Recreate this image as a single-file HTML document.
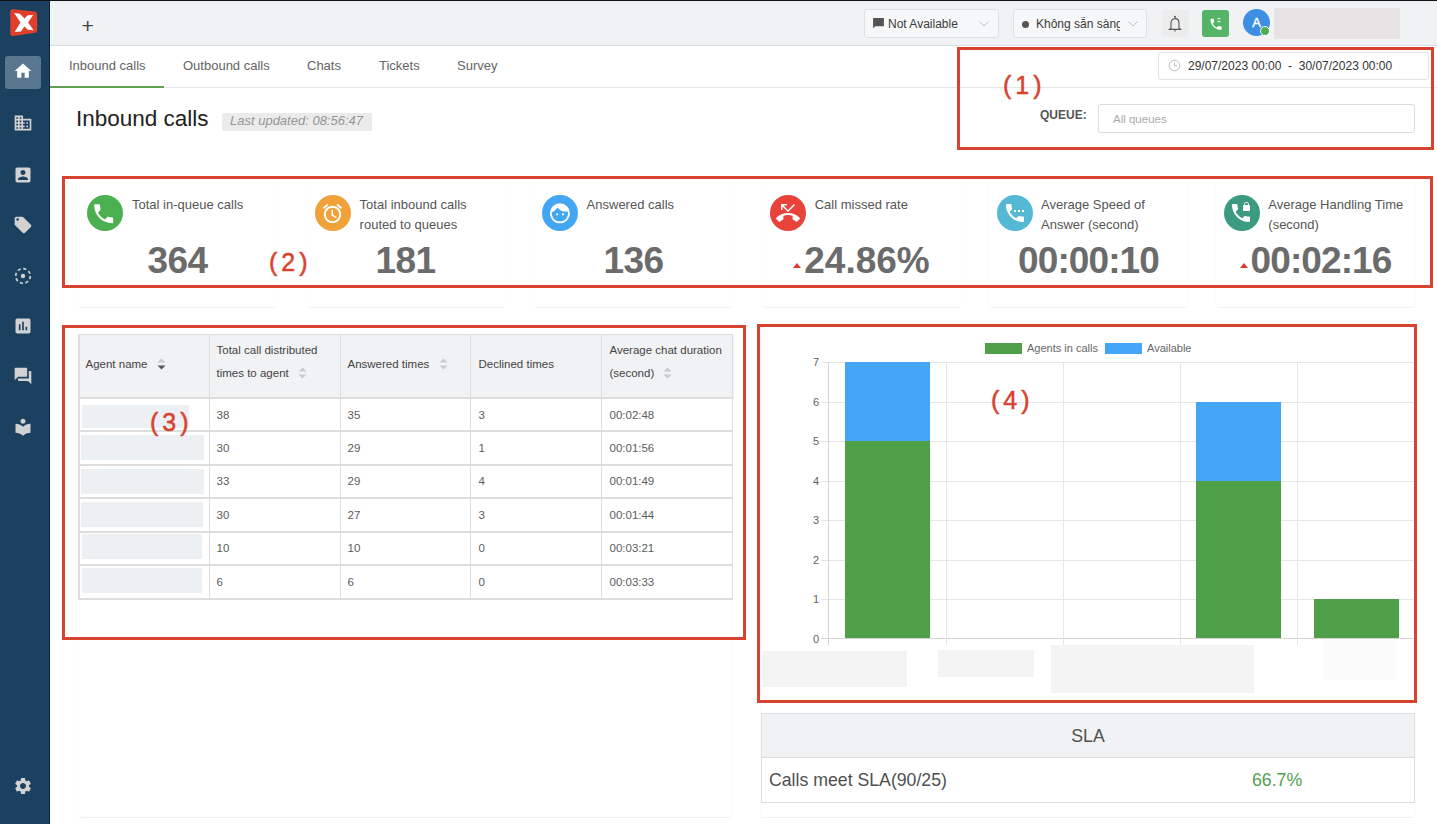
<!DOCTYPE html>
<html><head><meta charset="utf-8">
<style>
*{box-sizing:border-box;margin:0;padding:0}
html,body{width:1437px;height:824px;overflow:hidden;background:#fff;font-family:"Liberation Sans",sans-serif;color:#555}
.abs{position:absolute}
#topline{left:0;top:0;width:1437px;height:1px;background:#111}
#side{left:0;top:1px;width:49px;height:823px;background:#1c4060;border-right:1px solid #223f69}
#sideline{left:49px;top:0;width:1px;height:824px;background:#0d1f3a}
#topbar{left:50px;top:1px;width:1387px;height:45px;background:#f1f2f4;border-bottom:1px solid #dcdde0}
#tabs{left:50px;top:46px;width:1387px;height:42px;background:#fff;border-bottom:1px solid #e6e6e6}
.tab{position:absolute;top:13px;font-size:13px;color:#646464;white-space:nowrap}
.redbox{position:absolute;border:3px solid #d7432f}
.ann{position:absolute;color:#d7432f;font-family:"Liberation Sans",sans-serif;font-size:25px;line-height:30px;letter-spacing:4px;white-space:nowrap;-webkit-text-stroke:0.5px #d7432f}
.card{position:absolute;background:#fff;border:1px solid #fcfcfc;border-bottom-color:#f1f1f1;border-radius:5px}
.ic{position:absolute;width:36px;height:36px;border-radius:50%}
.lbl{position:absolute;font-size:13px;line-height:20px;color:#555;white-space:nowrap}
.num{position:absolute;font-size:37px;font-weight:bold;color:#6b6b6b;white-space:nowrap;text-align:center;line-height:40px}
.tri{display:inline-block;width:0;height:0;border-left:4.5px solid transparent;border-right:4.5px solid transparent;border-bottom:5px solid #e0392b;vertical-align:baseline;margin-right:3px;position:relative;top:-5px}

.tbl{position:absolute;border-collapse:collapse;table-layout:fixed;font-size:11.5px;color:#5c5c5c}
.tbl td,.tbl th{border:1px solid transparent;padding:0 6.5px;text-align:left;font-weight:normal;vertical-align:middle}
.tbl th{background:#f1f2f4;line-height:23px;color:#444;padding-bottom:4px}
.tbl th.two{padding-bottom:8px}
.tbl td{padding-bottom:2px}
.tbl thead tr{border-bottom:2px solid transparent}
.sort{display:inline-block;width:9px;height:12px;vertical-align:middle;margin-left:6px;position:relative;top:-1px}
.gbar{position:absolute;background:#edf0f2}
</style></head><body>
<div id="topline" class="abs"></div>
<div id="side" class="abs"></div>
<div id="sideline" class="abs"></div>
<div class="abs" style="left:50px;top:87px;width:1px;height:737px;background:#f4f6fc"></div>
<div id="topbar" class="abs"></div>
<div id="tabs" class="abs"></div>

<!-- logo -->
<svg class="abs" style="left:0;top:0" width="49" height="45" viewBox="0 0 49 45">
 <path d="M13 9.3 L34.3 11.6 Q37.1 11.9 37.1 14.6 L37.3 30.4 Q37.3 32.4 35.1 32.7 L13.6 36 Q10.3 36.4 10.3 33 L10.3 12.5 Q10.3 9 13 9.3Z" fill="#df3f2b"/>
 <path d="M14.2 13 L20 13.8 L24.4 18.6 L27.8 15.3 L33.2 14.9 L28.1 22.4 L33.6 30.2 L27.8 29.8 L24.4 26.6 L21 31.6 L14.7 32.1 L20.5 22.6 Z" fill="#fff"/>
</svg>
<div class="abs" style="left:5px;top:56px;width:36px;height:33px;background:#5a7790;border-radius:3px"></div>
<svg class="abs" style="left:13px;top:61px" width="20" height="20" viewBox="0 0 24 24"><path fill="#fff" d="M10 20v-6h4v6h5v-8h3L12 3 2 12h3v8z"/></svg>
<svg class="abs" style="left:13px;top:113px" width="20" height="20" viewBox="0 0 24 24"><path fill="#d2d2d2" d="M12 7V3H2v18h20V7H12zM6 19H4v-2h2v2zm0-4H4v-2h2v2zm0-4H4V9h2v2zm0-4H4V5h2v2zm4 12H8v-2h2v2zm0-4H8v-2h2v2zm0-4H8V9h2v2zm0-4H8V5h2v2zm10 12h-8v-2h2v-2h-2v-2h2v-2h-2V9h8v10zm-2-8h-2v2h2v-2zm0 4h-2v2h2v-2z"/></svg>
<svg class="abs" style="left:13px;top:165px" width="20" height="20" viewBox="0 0 24 24"><path fill="#d2d2d2" d="M3 5v14c0 1.1.89 2 2 2h14c1.1 0 2-.9 2-2V5c0-1.1-.9-2-2-2H5c-1.11 0-2 .9-2 2zm12 4c0 1.66-1.34 3-3 3s-3-1.34-3-3 1.34-3 3-3 3 1.34 3 3zm-9 8c0-2 4-3.1 6-3.1s6 1.1 6 3.1v1H6v-1z"/></svg>
<svg class="abs" style="left:13px;top:215px" width="20" height="20" viewBox="0 0 24 24"><path fill="#d2d2d2" d="M21.41 11.58l-9-9C12.05 2.22 11.55 2 11 2H4c-1.1 0-2 .9-2 2v7c0 .55.22 1.05.59 1.42l9 9c.36.36.86.58 1.410.58.55 0 1.05-.22 1.41-.59l7-7c.37-.36.59-.86.59-1.41 0-.55-.23-1.06-.59-1.42zM5.5 7C4.670 7 4 6.33 4 5.5S4.67 4 5.5 4 7 4.67 7 5.5 6.33 7 5.5 7z"/></svg>
<svg class="abs" style="left:13px;top:266px" width="20" height="20" viewBox="0 0 20 20"><circle cx="10" cy="10" r="7.3" fill="none" stroke="#d2d2d2" stroke-width="1.7" stroke-dasharray="3.2 2.53"/><circle cx="10" cy="10" r="2.2" fill="#d2d2d2"/></svg>
<svg class="abs" style="left:13px;top:316px" width="20" height="20" viewBox="0 0 24 24"><path fill="#d2d2d2" d="M19 3H5c-1.1 0-2 .9-2 2v14c0 1.1.9 2 2 2h14c1.1 0 2-.9 2-2V5c0-1.1-.9-2-2-2zM9 17H7v-7h2v7zm4 0h-2V7h2v10zm4 0h-2v-4h2v4z"/></svg>
<svg class="abs" style="left:13px;top:366px" width="20" height="20" viewBox="0 0 24 24"><path fill="#d2d2d2" d="M21 6h-2v9H6v2c0 .55.45 1 1 1h11l4 4V7c0-.55-.45-1-1-1zm-4 6V3c0-.55-.45-1-1-1H3c-.55 0-1 .45-1 1v14l4-4h10c.55 0 1-.45 1-1z"/></svg>
<svg class="abs" style="left:13px;top:417px" width="20" height="20" viewBox="0 0 24 24"><path fill="#d2d2d2" d="M12 11.55C9.64 9.35 6.48 8 3 8v11c3.48 0 6.64 1.35 9 3.55 2.36-2.19 5.52-3.55 9-3.55V8c-3.48 0-6.64 1.35-9 3.55zM12 8c1.66 0 3-1.34 3-3s-1.340-3-3-3-3 1.34-3 3 1.34 3 3 3z"/></svg>
<svg class="abs" style="left:13px;top:776px" width="20" height="20" viewBox="0 0 24 24"><path fill="#d2d2d2" d="M19.14 12.94c.04-.3.06-.61.06-.94 0-.32-.02-.64-.07-.94l2.03-1.58c.18-.14.23-.41.12-.61l-1.92-3.32c-.12-.22-.37-.29-.59-.22l-2.39.96c-.5-.38-1.03-.7-1.62-.94l-.36-2.54c-.04-.24-.24-.41-.48-.41h-3.84c-.24 0-.43.17-.47.41l-.36 2.54c-.59.24-1.130.57-1.62.94l-2.39-.96c-.22-.08-.47 0-.59.22L2.74 8.87c-.12.21-.08.47.12.61l2.03 1.58c-.05.3-.09.63-.09.94s.02.64.07.94l-2.03 1.58c-.18.14-.23.41-.12.61l1.92 3.32c.12.22.37.29.59.22l2.39-.96c.5.38 1.03.7 1.62.94l.36 2.54c.05.24.24.41.48.41h3.84c.24 0 .44-.17.47-.41l.36-2.54c.59-.24 1.13-.56 1.62-.94l2.39.96c.22.08.47 0 .59-.22l1.92-3.32c.12-.22.07-.47-.12-.61l-2.01-1.58zM12 15.6c-1.98 0-3.6-1.62-3.6-3.6s1.62-3.6 3.6-3.6 3.6 1.62 3.6 3.6-1.62 3.6-3.6 3.6z"/></svg>

<!-- topbar -->
<div class="abs" style="left:81.5px;top:16px;font-size:21px;color:#444;line-height:20px">+</div>
<div class="abs" style="left:864px;top:9px;width:135px;height:29px;border:1px solid #dfe0e3;border-radius:3px;background:#f6f7f8"></div>
<svg class="abs" style="left:872px;top:17px" width="13" height="13" viewBox="0 0 24 24"><path fill="#555" d="M2 2h20v15H6l-4 4z"/></svg>
<div class="abs" style="left:888px;top:17px;font-size:12px;line-height:14px;color:#3a3a3a;white-space:nowrap">Not Available</div>
<svg class="abs" style="left:979px;top:21px" width="10" height="6" viewBox="0 0 10 6"><path d="M0.5 0.5L5 5L9.5 0.5" fill="none" stroke="#bbb" stroke-width="1"/></svg>
<div class="abs" style="left:1013px;top:9px;width:134px;height:29px;border:1px solid #dfe0e3;border-radius:3px;background:#f6f7f8"></div>
<div class="abs" style="left:1022px;top:21px;width:7px;height:7px;border-radius:50%;background:#555"></div>
<div class="abs" style="left:1036px;top:17px;width:84px;overflow:hidden;font-size:12px;line-height:15px;color:#3a3a3a;white-space:nowrap">Không sẵn sàng</div>
<svg class="abs" style="left:1128px;top:21px" width="10" height="6" viewBox="0 0 10 6"><path d="M0.5 0.5L5 5L9.5 0.5" fill="none" stroke="#bbb" stroke-width="1"/></svg>
<div class="abs" style="left:1162px;top:10px;width:27px;height:27px;border-radius:3px;background:#ececed"></div>
<svg class="abs" style="left:1168px;top:15px" width="14" height="18" viewBox="0 0 14 18"><path d="M7 1.2v1.6M3 13V8.3C3 5.6 4.7 3.6 7 3.6s4 2 4 4.7V13l1.6 1.4H1.4L3 13zM7 14.4v2" fill="none" stroke="#555" stroke-width="1.1"/><circle cx="7" cy="1.6" r="0.9" fill="#555"/></svg>
<div class="abs" style="left:1202px;top:10px;width:27px;height:27px;border-radius:3px;background:#55b468"></div>
<svg class="abs" style="left:1207px;top:15px" width="17" height="17" viewBox="0 0 24 24"><path fill="#fff" d="M6.6 10.8c1.4 2.8 3.8 5.1 6.6 6.6l2.2-2.2c.3-.3.7-.4 1-.2 1.1.4 2.3.6 3.6.6.6 0 1 .4 1 1V20c0 .6-.4 1-1 1C10.6 21 3 13.4 3 4c0-.6.5-1 1-1h3.5c.6 0 1 .4 1 1 0 1.3.2 2.5.6 3.6.1.3 0 .7-.2 1L6.6 10.8z" transform="translate(2.2 2.5) scale(0.88)"/><rect x="14.8" y="4.6" width="4.2" height="1.5" fill="#fff"/><rect x="14.8" y="8.6" width="4.2" height="1.5" fill="#fff"/></svg>
<div class="abs" style="left:1243px;top:9px;width:27px;height:27px;border-radius:50%;background:#3d8fe3;color:#fff;font-size:13px;line-height:27px;text-align:center;-webkit-text-stroke:0.4px #fff">A</div>
<div class="abs" style="left:1260px;top:26px;width:10px;height:10px;border-radius:50%;background:#4cae4c;border:1.3px solid #fff"></div>
<div class="abs" style="left:1274px;top:8px;width:126px;height:31px;background:#e7e3e5"></div>
<!-- tabs -->
<div class="tab" style="left:69px;top:58px">Inbound calls</div>
<div class="tab" style="left:183px;top:58px">Outbound calls</div>
<div class="tab" style="left:307px;top:58px">Chats</div>
<div class="tab" style="left:379px;top:58px">Tickets</div>
<div class="tab" style="left:457px;top:58px">Survey</div>
<div class="abs" style="left:50px;top:86px;width:114px;height:2px;background:#62a052"></div>

<!-- header -->
<div class="abs" style="left:76px;top:106px;font-size:22.5px;line-height:26px;color:#222;white-space:nowrap">Inbound calls</div>
<div class="abs" style="left:222px;top:113px;width:150px;height:18px;background:#ebebeb;border-radius:2px"></div>
<div class="abs" style="left:230px;top:113px;font-size:13px;line-height:16px;color:#969696;font-style:italic;white-space:nowrap">Last updated: 08:56:47</div>
<div class="abs" style="left:1158px;top:52px;width:271px;height:28px;border:1px solid #e3e3e3;border-radius:3px;background:#fff"></div>
<svg class="abs" style="left:1168px;top:59px" width="13" height="13" viewBox="0 0 13 13"><circle cx="6.5" cy="6.5" r="5.3" fill="none" stroke="#bbb" stroke-width="1"/><path d="M6.5 3.3V6.7H9" fill="none" stroke="#bbb" stroke-width="1"/></svg>
<div class="abs" style="left:1188px;top:59px;font-size:12px;line-height:14px;color:#333;white-space:pre">29/07/2023 00:00  -  30/07/2023 00:00</div>
<div class="abs" style="left:1040px;top:108px;font-size:12px;line-height:14px;color:#555;font-weight:bold;white-space:nowrap">QUEUE:</div>
<div class="abs" style="left:1098px;top:104px;width:317px;height:29px;border:1px solid #dcdcdc;border-radius:3px;background:#fff"></div>
<div class="abs" style="left:1113px;top:112px;font-size:11.5px;line-height:14px;color:#aaa;white-space:nowrap">All queues</div>
<!-- cards -->
<div class="card" style="left:77px;top:181px;width:201px;height:127px"></div>
<div class="card" style="left:305px;top:181px;width:201px;height:127px"></div>
<div class="card" style="left:533px;top:181px;width:201px;height:127px"></div>
<div class="card" style="left:761px;top:181px;width:201px;height:127px"></div>
<div class="card" style="left:988px;top:181px;width:201px;height:127px"></div>
<div class="card" style="left:1215px;top:181px;width:201px;height:127px"></div>
<div class="ic" style="left:86.5px;top:195px;background:#4caf50"></div>
<div class="lbl" style="left:132px;top:195px">Total in-queue calls</div>
<div class="num" style="left:77px;top:241px;width:201px"><span style="letter-spacing:-0.6px">364</span></div>
<div class="ic" style="left:314.5px;top:195px;background:#f0a13a"></div>
<div class="lbl" style="left:359.6px;top:195px">Total inbound calls<br>routed to queues</div>
<div class="num" style="left:305px;top:241px;width:201px"><span style="letter-spacing:-0.6px">181</span></div>
<div class="ic" style="left:541.8px;top:195px;background:#42a6f2"></div>
<div class="lbl" style="left:586.6px;top:195px">Answered calls</div>
<div class="num" style="left:533px;top:241px;width:201px"><span style="letter-spacing:-0.6px">136</span></div>
<div class="ic" style="left:770px;top:195px;background:#e8433a"></div>
<div class="lbl" style="left:814.7px;top:195px">Call missed rate</div>
<div class="num" style="left:761px;top:241px;width:201px"><span class="tri"></span>24.86%</div>
<div class="ic" style="left:996.8px;top:195px;background:#55b9d6"></div>
<div class="lbl" style="left:1041px;top:195px">Average Speed of<br>Answer (second)</div>
<div class="num" style="left:988px;top:241px;width:201px"><span style="letter-spacing:-0.9px">00:00:10</span></div>
<div class="ic" style="left:1224px;top:195px;background:#3b9a7f"></div>
<div class="lbl" style="left:1268.3px;top:195px">Average Handling Time<br>(second)</div>
<div class="num" style="left:1215px;top:241px;width:201px"><span class="tri"></span><span style="letter-spacing:-0.9px">00:02:16</span></div>

<div class="card" style="left:77px;top:327px;width:656px;height:491px"></div>
<div class="card" style="left:760px;top:327px;width:656px;height:491px"></div>

<svg class="abs" style="left:91.4px;top:200.5px" width="25.4" height="25.4" viewBox="0 0 24 24"><path fill="#fff" d="M20 15.5c-1.25 0-2.45-.2-3.57-.57-.35-.11-.74-.03-1.02.24l-2.2 2.2c-2.830-1.44-5.15-3.75-6.59-6.59l2.2-2.21c.28-.26.36-.65.25-1C8.7 6.45 8.5 5.25 8.5 4c0-.55-.45-1-1-1H4c-.55 0-1 .45-1 1 0 9.39 7.61 17 17 17 .55 0 1-.45 1-1v-3.5c0-.55-.45-1-1-1z"/></svg>
<svg class="abs" style="left:320.9px;top:201.9px" width="23" height="23" viewBox="0 0 24 24"><path fill="#fff" d="M22 5.72l-4.6-3.86-1.29 1.53 4.6 3.86L22 5.72zM7.88 3.39L6.6 1.86 2 5.71l1.29 1.53 4.59-3.85zM12.5 8H11v6l4.75 2.85.75-1.23-4-2.37V8zM12 4c-4.97 0-9 4.03-9 9s4.02 9 9 9c4.97 0 9-4.03 9-9s-4.03-9-9-9zm0 16c-3.87 0-7-3.13-7-7s3.13-7 7-7 7 3.13 7 7-3.13 7-7 7z"/></svg>
<svg class="abs" style="left:541.9px;top:194.7px" width="36" height="36" viewBox="0 0 36 36"><defs><clipPath id="fc"><circle cx="17.9" cy="18.3" r="9"/></clipPath></defs><circle cx="17.9" cy="18.3" r="9.15" fill="none" stroke="#fff" stroke-width="1.8"/><path clip-path="url(#fc)" d="M8 17.6 C11 17.2 14 15 15.4 12.4 C17.5 15.5 21.5 17 25 16.5 C26 16.5 27 16.8 28 17 L28 8 L8 8Z" fill="#fff"/><circle cx="15.1" cy="19.3" r="1.1" fill="#fff"/><circle cx="21" cy="19.3" r="1.1" fill="#fff"/></svg>
<svg class="abs" style="left:776px;top:201px" width="24" height="24" viewBox="0 0 24 24"><path fill="#fff" d="M6.5 5.5L12 11l7-7-1-1-6 6-4.5-4.5H11V3H5v6h1.5V5.5zm17.21 11.17C20.66 13.78 16.54 12 12 12 7.46 12 3.34 13.78.29 16.67c-.18.18-.29.43-.29.71s.11.53.29.71l2.48 2.48c.18.18.43.29.71.29.27 0 .52-.11.7-.28.79-.74 1.69-1.36 2.66-1.85.33-.16.56-.5.56-.9v-3.1c1.45-.48 3-.73 4.6-.73 1.6 0 3.15.25 4.6.72v3.1c0 .39.23.74.56.9.98.49 1.87 1.12 2.67 1.850.18.18.43.28.7.28.28 0 .53-.11.71-.29l2.48-2.48c.18-.18.29-.43.29-.71s-.12-.52-.3-.7z"/></svg>
<svg class="abs" style="left:1002.8px;top:201.2px" width="24" height="24" viewBox="0 0 24 24"><path fill="#fff" d="M20 15.5c-1.25 0-2.45-.2-3.57-.57-.35-.11-.74-.03-1.02.24l-2.2 2.2c-2.830-1.44-5.15-3.75-6.59-6.59l2.2-2.21c.28-.26.36-.65.25-1C8.7 6.45 8.5 5.25 8.5 4c0-.55-.45-1-1-1H4c-.55 0-1 .45-1 1 0 9.39 7.61 17 17 17 .55 0 1-.45 1-1v-3.5c0-.55-.45-1-1-1zM11 9h2v2h-2zM15 9h2v2h-2zM19 9h2v2h-2z"/></svg>
<svg class="abs" style="left:1229.3px;top:201.2px" width="24" height="24" viewBox="0 0 24 24"><path fill="#fff" d="M20 15.5c-1.25 0-2.45-.2-3.57-.57-.35-.11-.74-.03-1.02.24l-2.2 2.2c-2.830-1.44-5.15-3.75-6.59-6.59l2.2-2.21c.28-.26.36-.65.25-1C8.7 6.45 8.5 5.25 8.5 4c0-.55-.45-1-1-1H4c-.55 0-1 .45-1 1 0 9.39 7.61 17 17 17 .55 0 1-.45 1-1v-3.5c0-.55-.45-1-1-1zM20 4v-.5C20 2.12 18.88 1 17.5 1S15 2.12 15 3.5V4c-.55 0-1 .45-1 1v4c0 .55.45 1 1 1h5c.55 0 1-.45 1-1V5c0-.55-.45-1-1-1zm-.8 0h-3.4v-.5c0-.94.76-1.7 1.7-1.7s1.7.76 1.7 1.7V4z"/></svg>
<!-- table -->
<table class="tbl" style="left:78px;top:334px;width:655px">
<colgroup><col style="width:131px"><col style="width:131px"><col style="width:131px"><col style="width:131px"><col style="width:131px"></colgroup>
<thead><tr style="height:64px">
<th>Agent name <svg class="sort" viewBox="0 0 9 12"><path d="M0.5 4.5L4.5 0.5L8.5 4.5Z" fill="#c6cbd2"/><path d="M0.5 7.5L4.5 11.5L8.5 7.5Z" fill="#555"/></svg></th>
<th class="two">Total call distributed<br>times to agent <svg class="sort" viewBox="0 0 9 12"><path d="M0.5 4.5L4.5 0.5L8.5 4.5Z" fill="#c6cbd2"/><path d="M0.5 7.5L4.5 11.5L8.5 7.5Z" fill="#c6cbd2"/></svg></th>
<th>Answered times <svg class="sort" viewBox="0 0 9 12"><path d="M0.5 4.5L4.5 0.5L8.5 4.5Z" fill="#c6cbd2"/><path d="M0.5 7.5L4.5 11.5L8.5 7.5Z" fill="#c6cbd2"/></svg></th>
<th>Declined times</th>
<th class="two">Average chat duration<br>(second) <svg class="sort" viewBox="0 0 9 12"><path d="M0.5 4.5L4.5 0.5L8.5 4.5Z" fill="#c6cbd2"/><path d="M0.5 7.5L4.5 11.5L8.5 7.5Z" fill="#c6cbd2"/></svg></th>
</tr></thead><tbody>
<tr style="height:33.5px"><td></td><td>38</td><td>35</td><td>3</td><td>00:02:48</td></tr>
<tr style="height:33.5px"><td></td><td>30</td><td>29</td><td>1</td><td>00:01:56</td></tr>
<tr style="height:33.5px"><td></td><td>33</td><td>29</td><td>4</td><td>00:01:49</td></tr>
<tr style="height:33.5px"><td></td><td>30</td><td>27</td><td>3</td><td>00:01:44</td></tr>
<tr style="height:33.5px"><td></td><td>10</td><td>10</td><td>0</td><td>00:03:21</td></tr>
<tr style="height:33.5px"><td></td><td>6</td><td>6</td><td>0</td><td>00:03:33</td></tr>
</tbody></table>
<div class="gbar" style="left:82px;top:405px;width:107px;height:23px"></div>
<div class="gbar" style="left:81px;top:435px;width:123px;height:25px"></div>
<div class="gbar" style="left:81px;top:469px;width:123px;height:25px"></div>
<div class="gbar" style="left:81px;top:502px;width:122px;height:25px"></div>
<div class="gbar" style="left:82px;top:534px;width:120px;height:25px"></div>
<div class="gbar" style="left:82px;top:568px;width:120px;height:25px"></div>
<!-- chart -->
<svg class="abs" style="left:757px;top:324px" width="680" height="400" viewBox="757 324 680 400" shape-rendering="crispEdges">
<rect x="985" y="343" width="37" height="11" fill="#4e9f47"/>
<rect x="1105" y="343" width="37" height="11" fill="#43a5f5"/>
<line x1="821" y1="638.5" x2="1414" y2="638.5" stroke="#d4d4d4" stroke-width="1"/>
<line x1="821" y1="599.5" x2="1414" y2="599.5" stroke="#e6e6e6" stroke-width="1"/>
<line x1="821" y1="560.5" x2="1414" y2="560.5" stroke="#e6e6e6" stroke-width="1"/>
<line x1="821" y1="520.5" x2="1414" y2="520.5" stroke="#e6e6e6" stroke-width="1"/>
<line x1="821" y1="481.5" x2="1414" y2="481.5" stroke="#e6e6e6" stroke-width="1"/>
<line x1="821" y1="441.5" x2="1414" y2="441.5" stroke="#e6e6e6" stroke-width="1"/>
<line x1="821" y1="402.5" x2="1414" y2="402.5" stroke="#e6e6e6" stroke-width="1"/>
<line x1="821" y1="362.5" x2="1414" y2="362.5" stroke="#e6e6e6" stroke-width="1"/>
<line x1="828.5" y1="362" x2="828.5" y2="645" stroke="#d4d4d4" stroke-width="1"/>
<line x1="946.5" y1="362" x2="946.5" y2="645" stroke="#e6e6e6" stroke-width="1"/>
<line x1="1063.5" y1="362" x2="1063.5" y2="645" stroke="#e6e6e6" stroke-width="1"/>
<line x1="1180.5" y1="362" x2="1180.5" y2="645" stroke="#e6e6e6" stroke-width="1"/>
<line x1="1297.5" y1="362" x2="1297.5" y2="645" stroke="#e6e6e6" stroke-width="1"/>
<rect x="845" y="441" width="85" height="197" fill="#4e9f47"/>
<rect x="845" y="362" width="85" height="79" fill="#43a5f5"/>
<rect x="1196" y="481" width="85" height="157" fill="#4e9f47"/>
<rect x="1196" y="402" width="85" height="79" fill="#43a5f5"/>
<rect x="1313.5" y="599" width="85" height="39" fill="#4e9f47"/>
</svg>
<div class="abs" style="left:790px;top:631.5px;width:29px;text-align:right;font-size:11px;line-height:14px;color:#606060">0</div>
<div class="abs" style="left:790px;top:592.0px;width:29px;text-align:right;font-size:11px;line-height:14px;color:#606060">1</div>
<div class="abs" style="left:790px;top:552.6px;width:29px;text-align:right;font-size:11px;line-height:14px;color:#606060">2</div>
<div class="abs" style="left:790px;top:513.1px;width:29px;text-align:right;font-size:11px;line-height:14px;color:#606060">3</div>
<div class="abs" style="left:790px;top:473.7px;width:29px;text-align:right;font-size:11px;line-height:14px;color:#606060">4</div>
<div class="abs" style="left:790px;top:434.2px;width:29px;text-align:right;font-size:11px;line-height:14px;color:#606060">5</div>
<div class="abs" style="left:790px;top:394.8px;width:29px;text-align:right;font-size:11px;line-height:14px;color:#606060">6</div>
<div class="abs" style="left:790px;top:355.3px;width:29px;text-align:right;font-size:11px;line-height:14px;color:#606060">7</div>
<div class="abs" style="left:1027px;top:341px;font-size:11px;line-height:14px;color:#666;white-space:nowrap">Agents in calls</div>
<div class="abs" style="left:1147px;top:341px;font-size:11px;line-height:14px;color:#666;white-space:nowrap">Available</div>
<div class="abs" style="left:762px;top:651px;width:145px;height:36px;background:#f3f3f3"></div>
<div class="abs" style="left:938px;top:650px;width:96px;height:27px;background:#f3f3f3"></div>
<div class="abs" style="left:1051px;top:645px;width:203px;height:48px;background:#f4f4f4"></div>
<div class="abs" style="left:1323px;top:640px;width:73px;height:40px;background:#fbfbfb"></div>
<!-- SLA -->
<div class="abs" style="left:761px;top:713px;width:654px;height:90px;border:1px solid #dedede"></div>
<div class="abs" style="left:762px;top:714px;width:652px;height:44px;background:#f1f2f4;border-bottom:1px solid #dedede"></div>
<div class="abs" style="left:762px;top:725px;width:652px;text-align:center;font-size:17.7px;line-height:22px;color:#505050">SLA</div>
<div class="abs" style="left:769px;top:769px;font-size:17.7px;line-height:22px;color:#505050;white-space:nowrap">Calls meet SLA(90/25)</div>
<div class="abs" style="left:1252px;top:769px;font-size:17.7px;line-height:22px;color:#4fa152;white-space:nowrap">66.7%</div>

<!-- table grid -->
<div class="abs" style="left:78px;top:334px;width:655px;height:1px;background:#dddddd"></div>
<div class="abs" style="left:78px;top:397px;width:655px;height:2px;background:#dddddd"></div>
<div class="abs" style="left:78px;top:430px;width:655px;height:2px;background:#dddddd"></div>
<div class="abs" style="left:78px;top:464px;width:655px;height:2px;background:#dddddd"></div>
<div class="abs" style="left:78px;top:497px;width:655px;height:2px;background:#dddddd"></div>
<div class="abs" style="left:78px;top:531px;width:655px;height:2px;background:#dddddd"></div>
<div class="abs" style="left:78px;top:564px;width:655px;height:2px;background:#dddddd"></div>
<div class="abs" style="left:78px;top:598px;width:655px;height:2px;background:#dddddd"></div>
<div class="abs" style="left:78px;top:334px;width:2px;height:266px;background:#dddddd"></div>
<div class="abs" style="left:209px;top:334px;width:1px;height:266px;background:#dddddd"></div>
<div class="abs" style="left:340px;top:334px;width:1px;height:266px;background:#dddddd"></div>
<div class="abs" style="left:470px;top:334px;width:1px;height:266px;background:#dddddd"></div>
<div class="abs" style="left:601px;top:334px;width:1px;height:266px;background:#dddddd"></div>
<div class="abs" style="left:732px;top:334px;width:1px;height:266px;background:#dddddd"></div>
<!-- red annotation boxes -->
<div class="redbox" style="left:957px;top:47px;width:477px;height:103px"></div>
<div class="redbox" style="left:62px;top:176px;width:1371px;height:112px"></div>
<div class="redbox" style="left:62px;top:325px;width:684px;height:315px"></div>
<div class="redbox" style="left:757px;top:324px;width:660px;height:379px"></div>
<div class="ann" style="left:1003px;top:70px">(1)</div>
<div class="ann" style="left:269px;top:247px">(2)</div>
<div class="ann" style="left:150px;top:407px">(3)</div>
<div class="ann" style="left:991px;top:385px">(4)</div>

</body></html>
